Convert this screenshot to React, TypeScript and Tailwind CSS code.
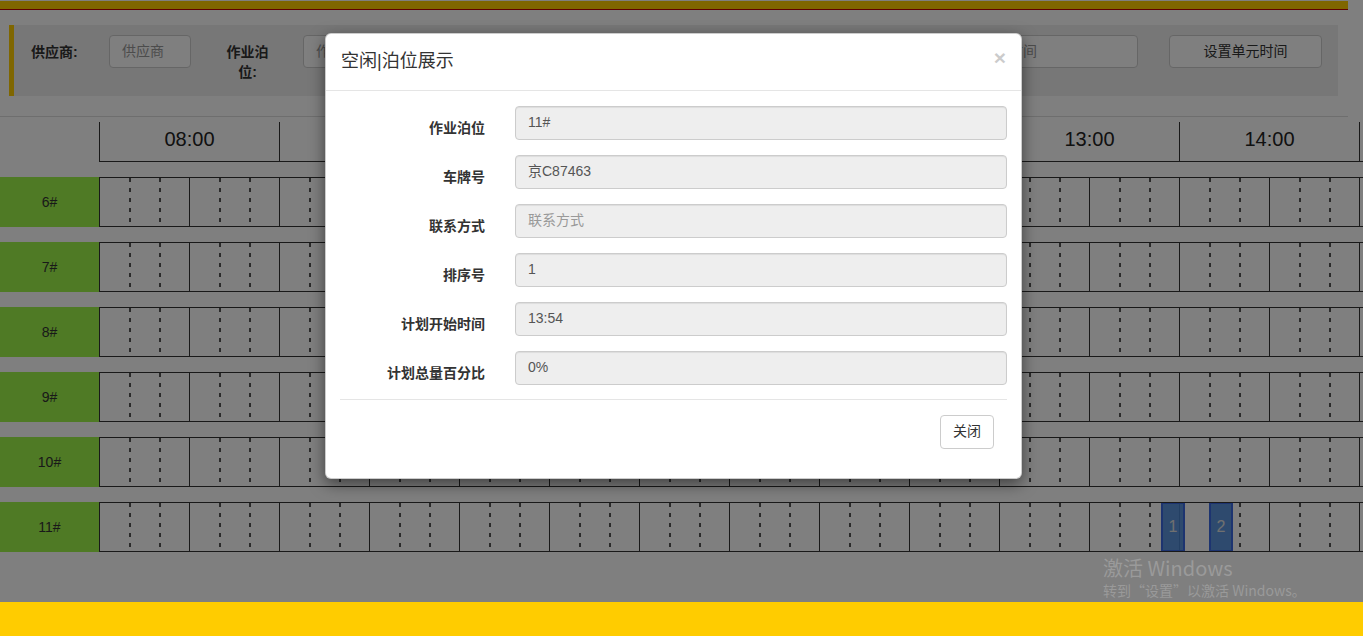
import React from 'react';

const hours = ['08:00', '09:00', '10:00', '11:00', '12:00', '13:00', '14:00', ''];
const berths = ['6#', '7#', '8#', '9#', '10#', '11#'];
const cells = Array.from({ length: 43 }, (_, i) => i);

const fields = [
  { label: '作业泊位', value: '11#' },
  { label: '车牌号', value: '京C87463' },
  { label: '联系方式', value: '', placeholder: '联系方式' },
  { label: '排序号', value: '1' },
  { label: '计划开始时间', value: '13:54' },
  { label: '计划总量百分比', value: '0%' },
];

// booked slots on berth 11#, offset from the start of the grid
const slots = [
  { id: 1, left: 1062 },
  { id: 2, left: 1110 },
];

const BerthRow: React.FC<{ name: string; showSlots?: boolean }> = ({ name, showSlots }) => (
  <div className="flex h-[50px]">
    <div className="w-[99px] shrink-0 bg-[#9ef44a] flex items-center justify-center text-[14px] text-[#333]">
      {name}
    </div>
    <div className="relative flex-1 flex overflow-hidden border-y border-[#333]">
      {cells.map((i) =>
        i % 3 === 0 ? (
          <div key={i} className="w-[30px] shrink-0 border-l border-[#333]" />
        ) : (
          <div
            key={i}
            className="w-[30px] shrink-0 bg-[repeating-linear-gradient(to_bottom,#555_0px,#555_4px,transparent_4px,transparent_10px)] bg-[length:2px_100%] bg-no-repeat"
          />
        )
      )}
      {showSlots &&
        slots.map((s) => (
          <div
            key={s.id}
            className="absolute top-[-1px] bottom-[-1px] w-[24px] border-2 border-[#3a68e0] bg-[#4a8ad8]/90 flex items-center justify-center text-[16px] text-[#e0e0e0]"
            style={{ left: s.left }}
          >
            {s.id}
          </div>
        ))}
    </div>
  </div>
);

export default function App() {
  return (
    <div className="relative h-[636px] w-full flex flex-col overflow-hidden bg-white font-['Liberation_Sans','Noto_Sans_CJK_SC',sans-serif]">
      <div className="relative flex-1">
        {/* top bar */}
        <div className="pt-[1px] w-[1348px]">
          <div className="h-[8px] bg-[#ffcc00]" />
          <div className="h-[1px] bg-[#c00000]" />
        </div>

        {/* filter panel */}
        <div className="mt-[15px] ml-[9px] w-[1329px] h-[71px] bg-[#eee] border-l-[5px] border-[#ffcc00] flex items-start pt-[10px] pl-[17px] pr-[16px] text-[14px] text-[#333]">
          <div className="w-[78px] mt-[7px] font-bold leading-[20px]">供应商:</div>
          <div className="w-[82px] h-[33px] border border-[#ccc] rounded-[4px] bg-white px-[12px] flex items-center text-[#999]">供应商</div>
          <div className="ml-[34px] w-[45px] mt-[7px] font-bold leading-[20px] text-center">作业泊位:</div>
          <div className="ml-[33px] w-[160px] h-[33px] border border-[#ccc] rounded-[4px] bg-white px-[12px] flex items-center text-[#999]">作业</div>
          <div className="ml-auto w-[170px] h-[33px] border border-[#ccc] rounded-[4px] bg-white pl-[40px] flex items-center text-[#999]">时间</div>
          <div className="ml-[31px] w-[153px] h-[33px] border border-[#ccc] rounded-[4px] bg-white flex items-center justify-center">设置单元时间</div>
        </div>

        <div className="mt-[20px] w-[1348px] border-t border-[#ddd]" />

        {/* time header */}
        <div className="mt-[5px] ml-[99px] h-[40px] flex overflow-hidden border-b border-[#333]">
          {hours.map((h, i) => (
            <div key={i} className="w-[180px] h-full shrink-0 border-l border-[#333] flex items-center justify-center pb-[5px] text-[20px] text-[#222]">
              {h}
            </div>
          ))}
        </div>

        {/* berth rows */}
        <div className="mt-[15px] flex flex-col gap-[15px]">
          {berths.map((b) => (
            <BerthRow key={b} name={b} showSlots={b === '11#'} />
          ))}
        </div>

        {/* backdrop */}
        <div className="absolute inset-0 bg-black/50" />

        {/* modal */}
        <div className="absolute left-[325px] top-[33px] w-[697px] bg-white rounded-[6px] border border-black/20 shadow-[0_5px_15px_rgba(0,0,0,0.5)] text-[#333]">
          <div className="p-[15px] border-b border-[#e5e5e5] flex justify-between items-start">
            <h4 className="text-[18px] leading-[25.7px]">空闲|泊位展示</h4>
            <span className="text-[21px] font-bold leading-none text-black opacity-20 -mt-[2px]">×</span>
          </div>
          <div className="pl-[15px] pr-[14px] py-[15px]">
            {fields.map((f) => (
              <div key={f.label} className="flex mb-[15px]">
                <div className="w-[144px] shrink-0 text-right text-[14px] font-bold leading-[20px] pt-[12px]">{f.label}</div>
                <div className="ml-[30px] flex-1 h-[34px] border border-[#ccc] rounded-[4px] bg-[#eee] shadow-[inset_0_1px_1px_rgba(0,0,0,0.075)] px-[12px] flex items-center text-[14px]">
                  {f.value ? <span className="text-[#555]">{f.value}</span> : <span className="text-[#999]">{f.placeholder}</span>}
                </div>
              </div>
            ))}
            <div className="-ml-[1px] -mt-[1px] border-t border-[#e5e5e5] pt-[15px] pb-[14px] pr-[13px] flex justify-end">
              <button className="w-[54px] h-[34px] border border-[#ccc] rounded-[4px] bg-white text-[14px] text-[#333]">关闭</button>
            </div>
          </div>
        </div>

        {/* windows activation watermark */}
        <div className="absolute left-[1103px] top-[555px] text-[#9a9a9a] font-['Noto_Sans_CJK_SC','Liberation_Sans',sans-serif]">
          <div className="text-[20px] leading-[26px]">激活 Windows</div>
          <div className="text-[14px] leading-[20px] -mt-[1px]">转到“设置”以激活 Windows。</div>
        </div>
      </div>

      {/* footer */}
      <div className="h-[34px] shrink-0 bg-[#ffcc00]" />
    </div>
  );
}
